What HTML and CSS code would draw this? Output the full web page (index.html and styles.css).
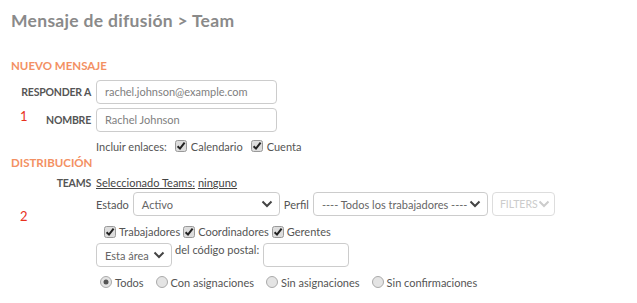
FILE: index.html
```html
<!DOCTYPE html>
<html lang="es">

<head>
    <meta charset="UTF-8">
    <meta name="viewport" content="width=device-width, initial-scale=1.0">
    <title>Mensaje de difusión</title>
    <link rel="stylesheet" href="styles.css">
</head>

<body>
    <h1 class="page-title">Mensaje de difusión &gt; Team</h1>

    <section class="block">
        <h2 class="block-title">NUEVO MENSAJE</h2>
        <span class="marker marker-1">1</span>
        <div class="form-grid">
            <label class="field-label">RESPONDER A</label>
            <div class="text-box wide">rachel.johnson@example.com</div>

            <label class="field-label">NOMBRE</label>
            <div class="text-box wide">Rachel Johnson</div>

            <span></span>
            <div class="inline-row links">
                <span>Incluir enlaces:</span>
                <span class="opt"><svg class="check" viewBox="0 0 12 12"><rect x="0.5" y="0.5" width="11" height="11" rx="2" /><path d="M2.6 6.2 L5 8.6 L9.6 2.6" /></svg>Calendario</span>
                <span class="opt"><svg class="check" viewBox="0 0 12 12"><rect x="0.5" y="0.5" width="11" height="11" rx="2" /><path d="M2.6 6.2 L5 8.6 L9.6 2.6" /></svg>Cuenta</span>
            </div>
        </div>
    </section>

    <section class="block">
        <h2 class="block-title tight">DISTRIBUCIÓN</h2>
        <span class="marker marker-2">2</span>
        <div class="form-grid compact">
            <label class="field-label">TEAMS</label>
            <div class="inline-row teams">
                <a href="#">Seleccionado Teams:</a><a href="#">ninguno</a>
            </div>

            <span></span>
            <div class="stack">
                <div class="inline-row">
                    <span>Estado</span>
                    <div class="select-box estado">Activo
                        <svg class="chev" viewBox="0 0 12 8"><path d="M1.5 1.5 L6 6 L10.5 1.5" /></svg>
                    </div>
                    <span>Perfil</span>
                    <div class="select-box perfil">---- Todos los trabajadores ----
                        <svg class="chev" viewBox="0 0 12 8"><path d="M1.5 1.5 L6 6 L10.5 1.5" /></svg>
                    </div>
                    <div class="filters-btn">FILTERS<svg class="chev" viewBox="0 0 12 8"><path d="M1.5 1.5 L6 6 L10.5 1.5" /></svg></div>
                </div>

                <div class="inline-row roles">
                    <span class="opt"><svg class="check" viewBox="0 0 12 12"><rect x="0.5" y="0.5" width="11" height="11" rx="2" /><path d="M2.6 6.2 L5 8.6 L9.6 2.6" /></svg>Trabajadores</span>
                    <span class="opt"><svg class="check" viewBox="0 0 12 12"><rect x="0.5" y="0.5" width="11" height="11" rx="2" /><path d="M2.6 6.2 L5 8.6 L9.6 2.6" /></svg>Coordinadores</span>
                    <span class="opt"><svg class="check" viewBox="0 0 12 12"><rect x="0.5" y="0.5" width="11" height="11" rx="2" /><path d="M2.6 6.2 L5 8.6 L9.6 2.6" /></svg>Gerentes</span>
                </div>

                <div class="inline-row area">
                    <div class="select-box area-select">Esta área
                        <svg class="chev" viewBox="0 0 12 8"><path d="M1.5 1.5 L6 6 L10.5 1.5" /></svg>
                    </div>
                    <span class="postal-label">del código postal:</span>
                    <div class="text-box postal"></div>
                </div>

                <div class="inline-row radios">
                    <span class="opt"><svg class="radio" viewBox="0 0 12 12"><circle cx="6" cy="6" r="5.5" /><circle class="dot" cx="6" cy="6" r="2.5" /></svg>Todos</span>
                    <span class="opt"><svg class="radio" viewBox="0 0 12 12"><circle cx="6" cy="6" r="5.5" /></svg>Con asignaciones</span>
                    <span class="opt"><svg class="radio" viewBox="0 0 12 12"><circle cx="6" cy="6" r="5.5" /></svg>Sin asignaciones</span>
                    <span class="opt"><svg class="radio" viewBox="0 0 12 12"><circle cx="6" cy="6" r="5.5" /></svg>Sin confirmaciones</span>
                </div>
            </div>
        </div>
    </section>
</body>

</html>
```

FILE: styles.css
```css
body {
    margin: 0;
    padding: 10px 11px 0;
    font-family: Lato, "Open Sans", sans-serif;
    font-size: 11px;
    color: #555;
    background: #fff;
    white-space: nowrap;
}

.page-title {
    margin: 0 0 28px;
    font-size: 17.5px;
    font-weight: 700;
    color: #8a8a8a;
    letter-spacing: 0.3px;
}

.block {
    position: relative;
}

.block-title {
    margin: 0 0 8px;
    font-size: 11.5px;
    font-weight: 700;
    color: #f39063;
}

.block-title.tight {
    margin-bottom: 6px;
}

/* red annotation numbers */
.marker {
    position: absolute;
    left: 9px;
    font-size: 13px;
    color: #e8321e;
}

.marker-1 {
    top: 49px;
}

.marker-2 {
    top: 52px;
}

.form-grid {
    display: grid;
    grid-template-columns: 80px 1fr;
    column-gap: 5px;
    row-gap: 4px;
    align-items: center;
}

.form-grid.compact {
    row-gap: 2px;
}

.field-label {
    text-align: right;
    font-size: 10.5px;
    font-weight: 700;
    color: #555;
    letter-spacing: -0.2px;
}

.text-box {
    box-sizing: border-box;
    height: 24px;
    padding: 0 8px;
    line-height: 22px;
    border: 1px solid #ccc;
    border-radius: 4px;
    color: #808080;
}

.text-box.wide {
    width: 181px;
}

.inline-row {
    display: flex;
    align-items: center;
    gap: 4px;
}

.links {
    height: 20px;
    gap: 8px;
}

.links .opt {
    gap: 4px;
}

.opt {
    display: inline-flex;
    align-items: center;
    gap: 3px;
}

.check {
    width: 12px;
    height: 12px;
}

.check rect {
    fill: #ddd;
    stroke: #999;
}

.check path {
    fill: none;
    stroke: #222;
    stroke-width: 2;
}

.radio {
    width: 12px;
    height: 12px;
}

.radio circle {
    fill: #e4e4e4;
    stroke: #aaa;
}

.radio .dot {
    fill: #555;
    stroke: none;
}

.teams {
    height: 15px;
    gap: 3px;
}

.teams a {
    color: #444;
    text-decoration: underline;
}

.stack {
    display: flex;
    flex-direction: column;
    gap: 2px;
}

.select-box {
    box-sizing: border-box;
    display: flex;
    align-items: center;
    justify-content: space-between;
    height: 24px;
    padding: 0 6px 0 8px;
    border: 1px solid #ccc;
    border-radius: 4px;
    color: #666;
}

.chev {
    width: 12px;
    height: 8px;
}

.chev path {
    fill: none;
    stroke: #444;
    stroke-width: 2;
}

.estado {
    width: 147px;
}

.perfil {
    width: 175px;
}

.filters-btn {
    box-sizing: border-box;
    display: flex;
    align-items: center;
    height: 24px;
    padding: 0 4px 0 7px;
    border: 1px solid #ddd;
    border-radius: 4px;
    color: #ccc;
    font-size: 10.5px;
}

.filters-btn .chev path {
    stroke: #ccc;
}

.roles {
    box-sizing: border-box;
    height: 23px;
    padding: 4px 0 0 8px;
    gap: 3px;
}

.area-select {
    width: 76px;
}

.postal-label {
    align-self: flex-start;
    margin-left: -1px;
}

.postal {
    width: 86px;
}

.radios {
    gap: 12px;
    padding-left: 4px;
    height: 26px;
}
```
